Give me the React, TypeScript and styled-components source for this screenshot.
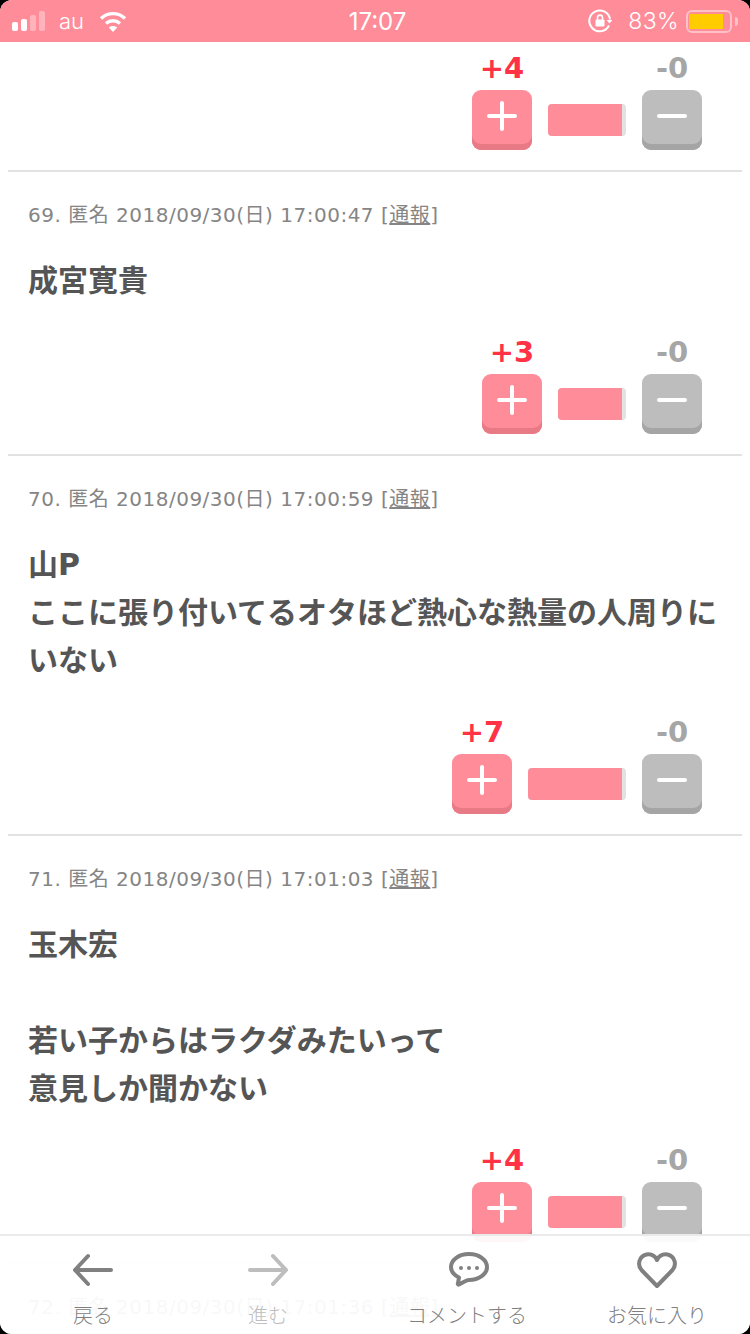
import React from "react";
import styled, { createGlobalStyle } from "styled-components";

const Global = createGlobalStyle`
  html, body { margin: 0; padding: 0; background: #000; }
  * { box-sizing: border-box; }
`;

const FONT = `"DejaVu Sans", "Noto Sans CJK JP", sans-serif`;

const Screen = styled.div`
  position: relative;
  width: 750px;
  height: 1334px;
  overflow: hidden;
  background: #fff;
  border-radius: 12px;
  display: flex;
  flex-direction: column;
  font-family: ${FONT};
`;

const StatusBar = styled.header`
  flex: none;
  height: 42px;
  background: #ff8c99;
  color: #fff;
  display: grid;
  grid-template-columns: 1fr auto 1fr;
  align-items: center;
  padding: 0 12px;
  font-family: Inter, "Liberation Sans", sans-serif;
  font-size: 22px;
`;

const StatusLeft = styled.div`
  display: flex;
  align-items: center;
`;

const StatusRight = styled.div`
  display: flex;
  align-items: center;
  justify-content: flex-end;
`;

const Signal = styled.div`
  display: flex;
  align-items: flex-end;
  gap: 3px;
  height: 20px;
`;

const SignalBar = styled.span<{ $h: number; $on: boolean }>`
  width: 6px;
  height: ${(p) => p.$h}px;
  border-radius: 2px;
  background: ${(p) => (p.$on ? "#fff" : "rgba(255,255,255,.35)")};
`;

const Carrier = styled.span`
  margin: 0 15px 0 14px;
  font-size: 22px;
  font-weight: 300;
`;

const Clock = styled.span`
  margin-left: 5px;
  font-size: 24px;
  font-weight: 400;
`;

const Percent = styled.span`
  margin: 0 7px 0 16px;
  font-weight: 300;
  font-size: 23px;
  letter-spacing: 0.4px;
`;

const Battery = styled.div`
  width: 46px;
  height: 23px;
  border: 2px solid rgba(255, 255, 255, 0.45);
  border-radius: 6px;
  padding: 2px 2px 2px 1px;
  display: flex;
`;

const BatteryFill = styled.span`
  width: 34px;
  background: #ffcc00;
`;

const BatteryCap = styled.span`
  width: 3px;
  height: 9px;
  margin-left: 3px;
  background: rgba(255, 255, 255, 0.45);
  border-radius: 0 3px 3px 0;
`;

const Feed = styled.main`
  flex: 1;
  padding: 0 8px;
  overflow: hidden;
`;

const Comment = styled.article`
  padding: 28px 20px 20px;
  border-bottom: 2px solid #e2e2e2;
`;

const FirstVotes = styled.div`
  padding: 5px 20px 20px;
  border-bottom: 2px solid #e2e2e2;
`;

const Meta = styled.div`
  font-size: 20px;
  line-height: 30px;
  letter-spacing: 0.5px;
  color: #858585;
  white-space: nowrap;
`;

const Report = styled.span`
  text-decoration: underline;
`;

const Body = styled.p`
  margin: 27px 0 26px;
  font-size: 30px;
  line-height: 48px;
  font-weight: 700;
  color: #555;
  white-space: pre-line;
`;

const VoteRow = styled.div`
  display: flex;
  justify-content: flex-end;
  align-items: flex-end;
  padding-right: 20px;
  gap: 16px;
`;

const VoteColumn = styled.div`
  width: 60px;
  display: flex;
  flex-direction: column;
  align-items: center;
`;

const Count = styled.span<{ $plus?: boolean }>`
  margin-bottom: 1px;
  font-size: 29px;
  line-height: 42px;
  font-weight: 700;
  white-space: nowrap;
  color: ${(p) => (p.$plus ? "#ff3246" : "#a6a6a6")};
`;

const VoteButton = styled.button<{ $plus?: boolean }>`
  width: 60px;
  height: 60px;
  padding: 0 0 8px;
  border: none;
  border-radius: 9px;
  background: ${(p) => (p.$plus ? "#ff8c99" : "#bdbdbd")};
  box-shadow: inset 0 -6px 0 ${(p) => (p.$plus ? "#e87a86" : "#a5a5a5")};
  display: flex;
  align-items: center;
  justify-content: center;
`;

const Gauge = styled.div`
  height: 32px;
  margin-bottom: 14px;
  border-radius: 4px;
  overflow: hidden;
  background: #e2e2e2;
`;

const GaugeFill = styled.div`
  height: 100%;
  margin-right: 4px;
  background: #ff8c99;
`;

const BottomNav = styled.nav`
  position: absolute;
  left: 0;
  right: 0;
  bottom: 0;
  height: 100px;
  border-top: 2px solid rgba(226, 226, 226, 0.7);
  background: rgba(255, 255, 255, 0.94);
  display: grid;
  grid-template-columns: 186px 164px 234px 146px;
`;

const NavItem = styled.div<{ $dim?: boolean }>`
  display: flex;
  flex-direction: column;
  align-items: center;
  padding-top: 12px;
  color: ${(p) => (p.$dim ? "#bdbdbd" : "#808080")};
  white-space: nowrap;
`;

const NavIcon = styled.svg`
  width: 44px;
  height: 44px;
  fill: none;
  stroke: currentColor;
  stroke-width: 4;
  stroke-linecap: round;
  stroke-linejoin: round;
`;

const NavLabel = styled.span`
  margin-top: 9px;
  font-family: "Noto Sans CJK JP", sans-serif;
  font-size: 20px;
  font-weight: 300;
  line-height: 28px;
`;

const GAUGE_WIDTH: Record<number, number> = { 3: 68, 4: 78, 7: 98 };

const Votes = ({ plus }: { plus: number }) => (
  <VoteRow>
    <VoteColumn>
      <Count $plus>+{plus}</Count>
      <VoteButton $plus aria-label="plus">
        <svg width="30" height="30" viewBox="0 0 30 30" fill="none" stroke="#fff" strokeWidth="4" strokeLinecap="round">
          <path d="M2 15h26M15 2v26" />
        </svg>
      </VoteButton>
    </VoteColumn>
    <Gauge style={{ width: GAUGE_WIDTH[plus] }}>
      <GaugeFill />
    </Gauge>
    <VoteColumn>
      <Count>-0</Count>
      <VoteButton aria-label="minus">
        <svg width="30" height="30" viewBox="0 0 30 30" fill="none" stroke="#fff" strokeWidth="4" strokeLinecap="round">
          <path d="M2 15h26" />
        </svg>
      </VoteButton>
    </VoteColumn>
  </VoteRow>
);

const comments = [
  { no: 69, time: "17:00:47", body: "成宮寛貴", plus: 3 },
  { no: 70, time: "17:00:59", body: "山P\nここに張り付いてるオタほど熱心な熱量の人周りにいない", plus: 7 },
  { no: 71, time: "17:01:03", body: "玉木宏\n\n若い子からはラクダみたいって\n意見しか聞かない", plus: 4 },
];

export default function App() {
  return (
    <Screen>
      <Global />
      <StatusBar>
        <StatusLeft>
          <Signal>
            <SignalBar $h={9} $on />
            <SignalBar $h={12} $on />
            <SignalBar $h={16} $on={false} />
            <SignalBar $h={20} $on={false} />
          </Signal>
          <Carrier>au</Carrier>
          <svg width="28" height="21" viewBox="0 0 28 21" fill="none" stroke="#fff" strokeWidth="3.4">
            <path d="M2 7.5C9 1 19 1 26 7.5" />
            <path d="M7 12.5c4-3.6 10-3.6 14 0" />
            <path d="M14 21l-4.2-4.6c2.4-2 6-2 8.4 0z" fill="#fff" stroke="none" />
          </svg>
        </StatusLeft>
        <Clock>17:07</Clock>
        <StatusRight>
          <svg width="24" height="24" viewBox="0 0 24 24" fill="none" stroke="#fff" strokeWidth="2">
            <path d="M21 16.500A10.400 10.400 0 1 1 22 10.500" />
            <path d="M18.500 11h6l-3 3.600z" fill="#fff" stroke="none" />
            <rect x="7.500" y="10.500" width="9" height="7" rx="1" fill="#fff" stroke="none" />
            <path d="M9.500 11V8.600a2.500 2.500 0 0 1 5 0V11" strokeWidth="1.6" />
          </svg>
          <Percent>83%</Percent>
          <Battery>
            <BatteryFill />
          </Battery>
          <BatteryCap />
        </StatusRight>
      </StatusBar>
      <Feed>
        <FirstVotes>
          <Votes plus={4} />
        </FirstVotes>
        {comments.map((c) => (
          <Comment key={c.no}>
            <Meta>
              {c.no}. 匿名 2018/09/30(日) {c.time} [<Report>通報</Report>]
            </Meta>
            <Body>{c.body}</Body>
            <Votes plus={c.plus} />
          </Comment>
        ))}
        <Comment>
          <Meta>
            72. 匿名 2018/09/30(日) 17:01:36 [<Report>通報</Report>]
          </Meta>
        </Comment>
      </Feed>
      <BottomNav>
        <NavItem>
          <NavIcon viewBox="0 0 44 44">
            <path d="M4 22h36M17 8L4 22l13 14" />
          </NavIcon>
          <NavLabel>戻る</NavLabel>
        </NavItem>
        <NavItem $dim>
          <NavIcon viewBox="0 0 44 44">
            <path d="M4 22h36M27 8l13 14-13 14" />
          </NavIcon>
          <NavLabel>進む</NavLabel>
        </NavItem>
        <NavItem>
          <NavIcon viewBox="0 0 44 44">
            <path d="M14 29.500C9 27 6 23.500 6 19 6 11.800 14 6 24 6s18 5.800 18 13-8 13-18 13c-2 0-4 1-10 4.500-1 .5-1.500-.5-1-1.500z" />
            <circle cx="16" cy="20" r="2" fill="currentColor" stroke="none" />
            <circle cx="24" cy="20" r="2" fill="currentColor" stroke="none" />
            <circle cx="32" cy="20" r="2" fill="currentColor" stroke="none" />
          </NavIcon>
          <NavLabel>コメントする</NavLabel>
        </NavItem>
        <NavItem>
          <NavIcon viewBox="0 0 44 44">
            <path d="M22 38L6.500 22C2 17 4 8 11.500 6.500 16 5.800 20 8 22 12c2-4 6-6.200 10.500-5.500C40 8 42 17 37.500 22z" />
          </NavIcon>
          <NavLabel>お気に入り</NavLabel>
        </NavItem>
      </BottomNav>
    </Screen>
  );
}
